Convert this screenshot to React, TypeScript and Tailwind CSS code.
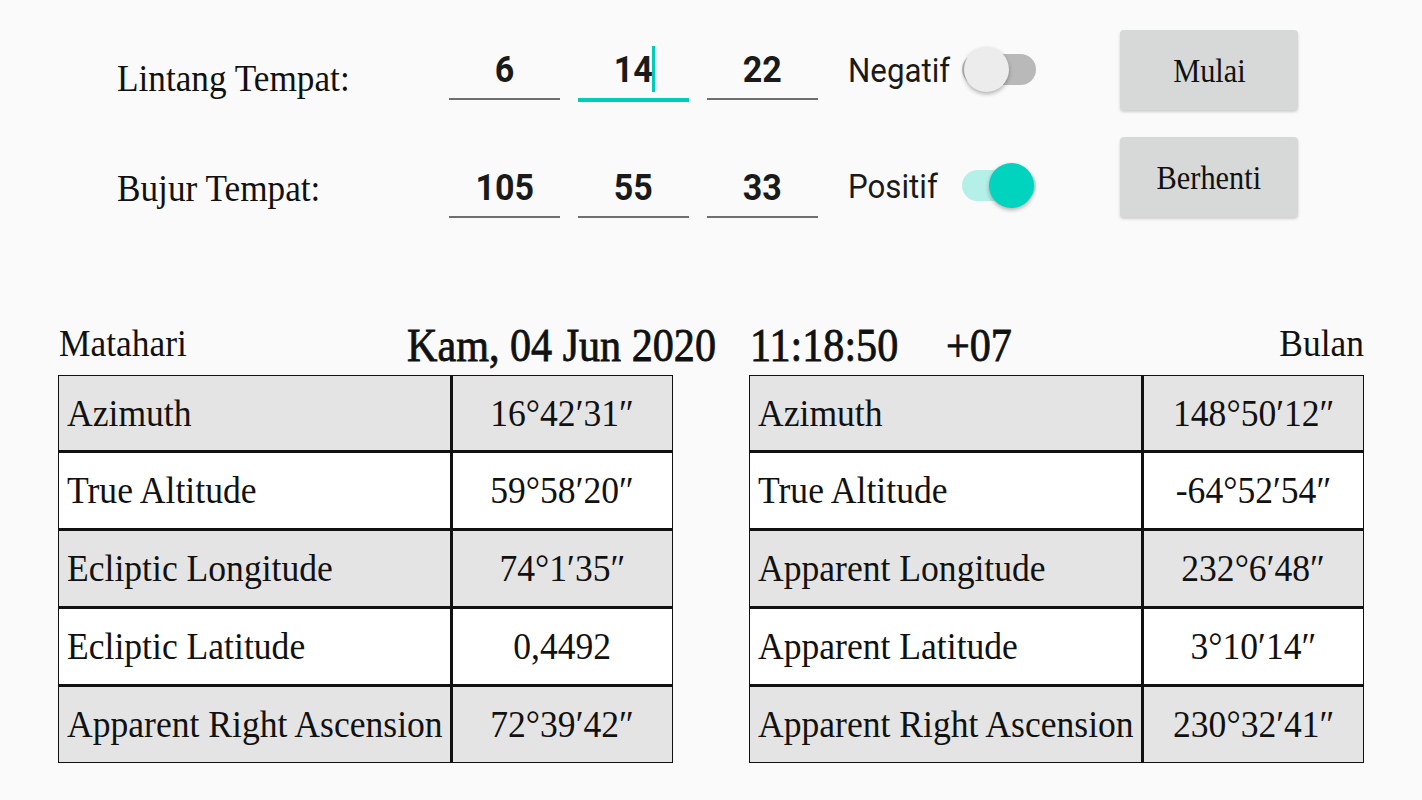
import type { ReactNode } from 'react'

const serif = "font-['Liberation_Serif',serif]"
const roboto = "font-['Roboto',sans-serif]"

// the app's text is drawn slightly narrow, so every label gets the same squeeze
function Sq({ children, origin = 'origin-left' }: { children: ReactNode; origin?: string }) {
  return <span className={`inline-block scale-x-[0.92] whitespace-nowrap ${origin}`}>{children}</span>
}

function Field({ value, focused = false }: { value: string; focused?: boolean }) {
  return (
    <div
      className={
        focused
          ? 'flex h-[62px] w-[111px] items-center justify-center border-b-[4px] border-[#00cdb9]'
          : 'flex h-[60px] w-[111px] items-center justify-center border-b-2 border-[#6f6f6f]'
      }
    >
      <span className={`${roboto} text-[37px] font-bold leading-none text-[#1a1a1a]`}>
        <Sq origin="origin-center">{value}</Sq>
      </span>
      {focused && <span className="-ml-[3px] h-[46px] w-[3px] bg-[#00cdb9]" />}
    </div>
  )
}

function Switch({ label, on }: { label: string; on: boolean }) {
  return (
    <div className="flex items-center">
      <span className={`${roboto} w-[114px] text-[34px] leading-none text-[#1a1a1a]`}>
        <Sq>{label}</Sq>
      </span>
      <div className="relative h-[46px] w-[74px]">
        <div
          className={`absolute left-0 top-[7px] h-[31px] w-[74px] rounded-full ${
            on ? 'bg-[#b4f0e7]' : 'bg-[#b9b9b9]'
          }`}
        />
        <div
          className={`absolute top-0 h-[45px] w-[45px] rounded-full shadow-[0_2px_4px_rgba(0,0,0,0.3)] ${
            on ? 'right-[2px] bg-[#00d3be]' : 'left-[2px] bg-[#ececec]'
          }`}
        />
      </div>
    </div>
  )
}

function Btn({ children }: { children: string }) {
  return (
    <button className="flex h-[80px] w-[178px] items-center justify-center rounded-[4px] bg-[#d7d8d8] shadow-[0_2px_3px_rgba(0,0,0,0.18)]">
      <span className={`${serif} pt-[3px] text-[33px] leading-none text-[#111]`}>
        <Sq origin="origin-center">{children}</Sq>
      </span>
    </button>
  )
}

const sun: [string, string][] = [
  ['Azimuth', '16°42′31″'],
  ['True Altitude', '59°58′20″'],
  ['Ecliptic Longitude', '74°1′35″'],
  ['Ecliptic Latitude', '0,4492'],
  ['Apparent Right Ascension', '72°39′42″'],
]

const moon: [string, string][] = [
  ['Azimuth', '148°50′12″'],
  ['True Altitude', '-64°52′54″'],
  ['Apparent Longitude', '232°6′48″'],
  ['Apparent Latitude', '3°10′14″'],
  ['Apparent Right Ascension', '230°32′41″'],
]

function Table({ rows }: { rows: [string, string][] }) {
  return (
    <div className={`${serif} w-[615px] border border-[#111] text-[38.7px] leading-none text-[#111]`}>
      {rows.map(([k, v], i) => (
        <div
          key={k}
          className={`flex ${i > 0 ? 'h-[78px] border-t-[3px] border-[#111]' : 'h-[74px]'} ${
            i % 2 === 0 ? 'bg-[#e4e4e4]' : 'bg-white'
          }`}
        >
          <div className="flex w-[391px] items-center pl-[8px]">
            <Sq>{k}</Sq>
          </div>
          <div className="flex flex-1 items-center justify-center border-l-[3px] border-[#111]">
            <Sq origin="origin-center">{v}</Sq>
          </div>
        </div>
      ))}
    </div>
  )
}

export default function App() {
  return (
    <div className="h-[800px] w-full overflow-hidden bg-[#fafafa]">
      {/* input rows + buttons */}
      <div className="flex pt-[30px]">
        <div className="flex w-[1120px] flex-col gap-[56px] pl-[117px] pt-[10px]">
          <div className="flex items-start">
            <span className={`${serif} w-[332px] pt-[19px] text-[38.3px] leading-none text-[#111]`}>
              <Sq>Lintang Tempat:</Sq>
            </span>
            <div className="flex gap-[18px]">
              <Field value="6" />
              <Field value="14" focused />
              <Field value="22" />
            </div>
            <div className="ml-[30px] mt-[7px]">
              <Switch label="Negatif" on={false} />
            </div>
          </div>
          <div className="flex items-start">
            <span className={`${serif} w-[332px] pt-[11px] text-[38.3px] leading-none text-[#111]`}>
              <Sq>Bujur Tempat:</Sq>
            </span>
            <div className="flex gap-[18px]">
              <Field value="105" />
              <Field value="55" />
              <Field value="33" />
            </div>
            <div className="ml-[30px] mt-[5px]">
              <Switch label="Positif" on />
            </div>
          </div>
        </div>
        <div className="flex flex-col gap-[27px]">
          <Btn>Mulai</Btn>
          <Btn>Berhenti</Btn>
        </div>
      </div>

      {/* date header */}
      <div className={`${serif} mt-[103px] flex h-[54px] items-start pl-[59px] pr-[58px] leading-none text-[#111]`}>
        <span className="w-[348px] pt-[3px] text-[38.5px]">
          <Sq>Matahari</Sq>
        </span>
        <span className="w-[343px] pt-[2px] text-[45.8px] [-webkit-text-stroke:0.8px_#111]">
          <Sq>Kam, 04 Jun 2020</Sq>
        </span>
        <span className="w-[196px] pt-[2px] text-[45.8px] [-webkit-text-stroke:0.8px_#111]">
          <Sq>11:18:50</Sq>
        </span>
        <span className="pt-[2px] text-[45.8px] [-webkit-text-stroke:0.8px_#111]">
          <Sq>+07</Sq>
        </span>
        <span className="ml-auto pt-[3px] text-[38.5px]">
          <Sq origin="origin-right">Bulan</Sq>
        </span>
      </div>

      <div className="flex gap-[76px] pl-[58px]">
        <Table rows={sun} />
        <Table rows={moon} />
      </div>
    </div>
  )
}
